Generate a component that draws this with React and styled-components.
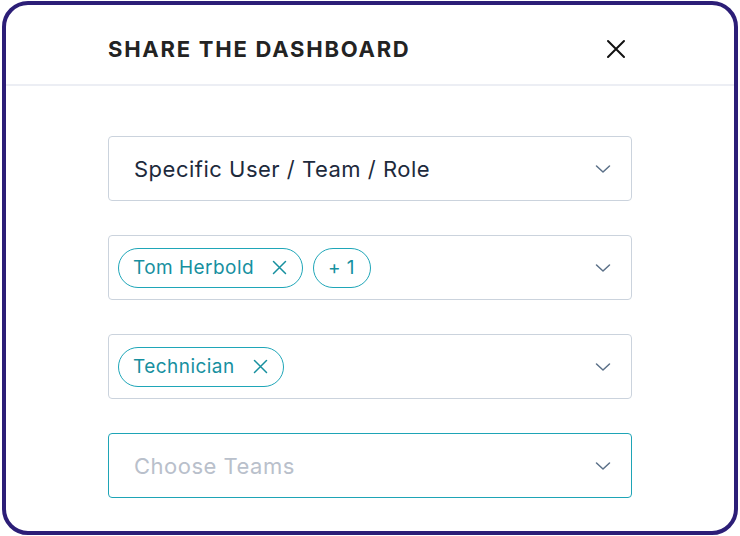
import React from "react";
import styled, { createGlobalStyle } from "styled-components";

const Global = createGlobalStyle`
  html, body { margin: 0; padding: 0; background: #ffffff; }
  body { font-family: Inter, "Noto Sans", "Liberation Sans", sans-serif; }
  * { box-sizing: border-box; }
`;

const Page = styled.div`
  width: 740px;
  height: 536px;
  padding: 1px 2px;
`;

const Frame = styled.div`
  width: 736px;
  height: 534px;
  border: 4px solid #2c1e77;
  border-radius: 26px;
  background: #fff;
  overflow: hidden;
  display: flex;
  flex-direction: column;
`;

const Header = styled.div`
  height: 81px;
  flex-shrink: 0;
  display: flex;
  align-items: center;
  justify-content: space-between;
  padding: 9px 108px 0 102px;
  border-bottom: 2px solid #eceef4;
`;

const Title = styled.h1`
  margin: 0;
  font-size: 22px;
  font-weight: 700;
  letter-spacing: 1.75px;
  color: #232323;
`;

const CloseButton = styled.button`
  border: 0;
  background: none;
  padding: 0;
  width: 20px;
  height: 20px;
  display: flex;
  align-items: center;
  justify-content: center;
  cursor: pointer;
`;

const Body = styled.div`
  padding: 50px 0 0 102px;
  display: flex;
  flex-direction: column;
  gap: 34px;
`;

const Field = styled.div`
  width: 524px;
  height: 65px;
  border: 1.5px solid ${(p) => (p.$active ? "#1ea4b6" : "#cbd3dd")};
  border-radius: 4px;
  display: flex;
  align-items: center;
  padding: 0 20px 0 ${(p) => (p.$chips ? "9px" : "25px")};
`;

const FieldContent = styled.div`
  flex: 1;
  display: flex;
  align-items: center;
  gap: 10px;
  font-size: 22px;
  color: ${(p) => (p.$placeholder ? "#b9c0cb" : "#1d2a3c")};
  letter-spacing: 0.5px;
`;

const Chip = styled.span`
  height: 40px;
  display: inline-flex;
  align-items: center;
  gap: 18px;
  padding: 0 15px 0 14px;
  border: 1.5px solid #1fa6b8;
  border-radius: 20px;
  color: #17909f;
  font-size: 19px;
  letter-spacing: 0.45px;
`;

const Chevron = () => (
  <svg width="16" height="10" viewBox="0 0 16 10" fill="none">
    <path d="M1.5 2 L8 8 L14.5 2" stroke="#5b7088" strokeWidth="1.5" strokeLinecap="round" strokeLinejoin="round" />
  </svg>
);

const XIcon = ({ size, color, width }) => (
  <svg width={size} height={size} viewBox="0 0 20 20" fill="none">
    <path d="M2 2 L18 18 M18 2 L2 18" stroke={color} strokeWidth={width} strokeLinecap="round" />
  </svg>
);

export default function App() {
  return (
    <>
      <Global />
      <Page>
        <Frame>
          <Header>
            <Title>SHARE THE DASHBOARD</Title>
            <CloseButton aria-label="Close">
              <XIcon size={20} color="#111" width={2} />
            </CloseButton>
          </Header>
          <Body>
            <Field>
              <FieldContent>Specific User / Team / Role</FieldContent>
              <Chevron />
            </Field>
            <Field $chips>
              <FieldContent>
                <Chip>
                  Tom Herbold
                  <XIcon size={15} color="#17909f" width={2} />
                </Chip>
                <Chip>+ 1</Chip>
              </FieldContent>
              <Chevron />
            </Field>
            <Field $chips>
              <FieldContent>
                <Chip>
                  Technician
                  <XIcon size={15} color="#17909f" width={2} />
                </Chip>
              </FieldContent>
              <Chevron />
            </Field>
            <Field $active>
              <FieldContent $placeholder>Choose Teams</FieldContent>
              <Chevron />
            </Field>
          </Body>
        </Frame>
      </Page>
    </>
  );
}
